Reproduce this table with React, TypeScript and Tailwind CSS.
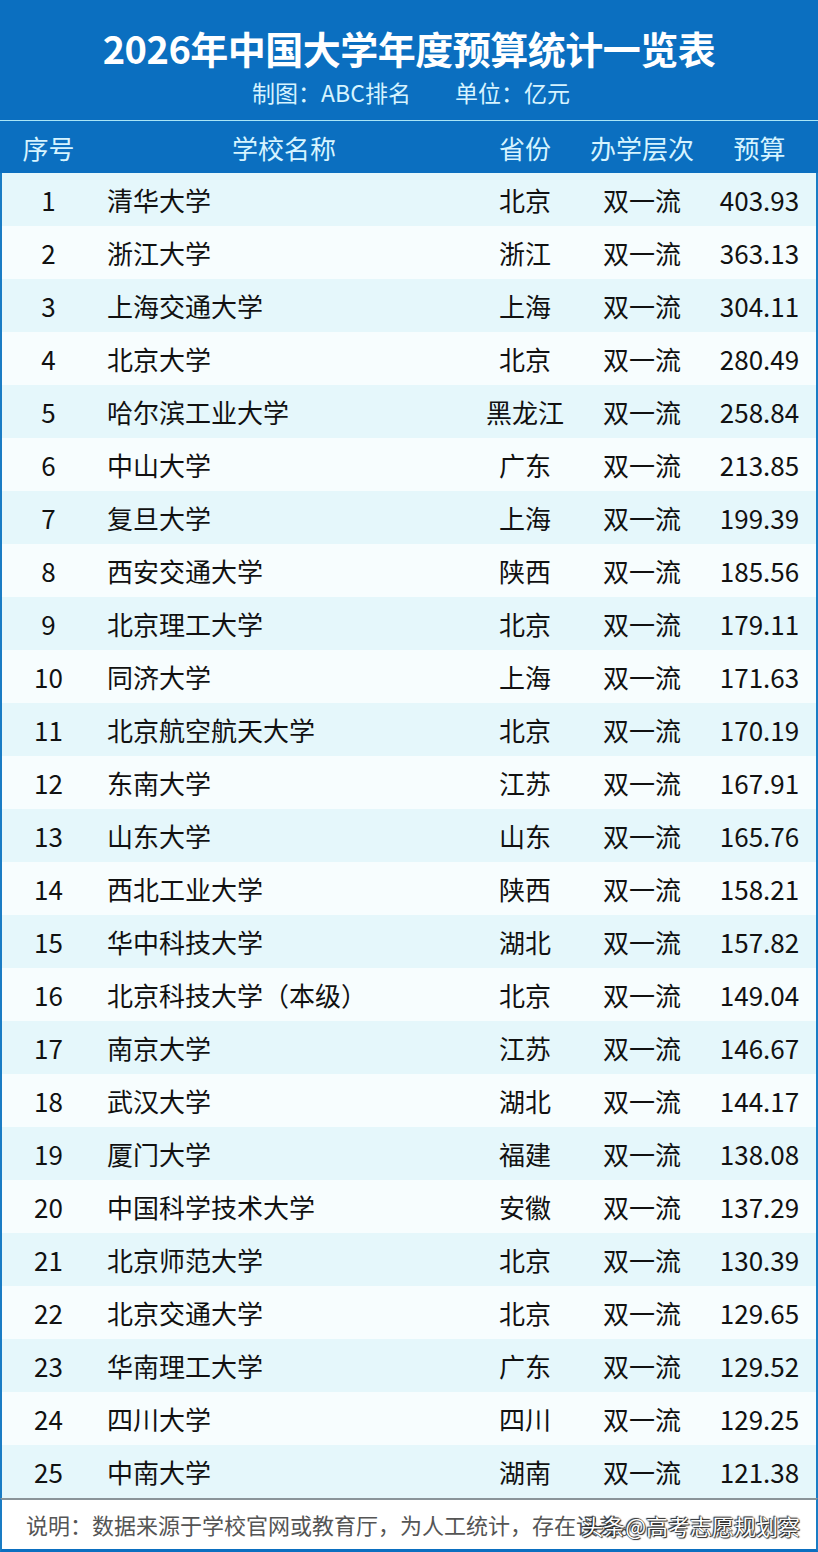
const rows: [string, string, string, string][] = [
  ['清华大学', '北京', '双一流', '403.93'],
  ['浙江大学', '浙江', '双一流', '363.13'],
  ['上海交通大学', '上海', '双一流', '304.11'],
  ['北京大学', '北京', '双一流', '280.49'],
  ['哈尔滨工业大学', '黑龙江', '双一流', '258.84'],
  ['中山大学', '广东', '双一流', '213.85'],
  ['复旦大学', '上海', '双一流', '199.39'],
  ['西安交通大学', '陕西', '双一流', '185.56'],
  ['北京理工大学', '北京', '双一流', '179.11'],
  ['同济大学', '上海', '双一流', '171.63'],
  ['北京航空航天大学', '北京', '双一流', '170.19'],
  ['东南大学', '江苏', '双一流', '167.91'],
  ['山东大学', '山东', '双一流', '165.76'],
  ['西北工业大学', '陕西', '双一流', '158.21'],
  ['华中科技大学', '湖北', '双一流', '157.82'],
  ['北京科技大学（本级）', '北京', '双一流', '149.04'],
  ['南京大学', '江苏', '双一流', '146.67'],
  ['武汉大学', '湖北', '双一流', '144.17'],
  ['厦门大学', '福建', '双一流', '138.08'],
  ['中国科学技术大学', '安徽', '双一流', '137.29'],
  ['北京师范大学', '北京', '双一流', '130.39'],
  ['北京交通大学', '北京', '双一流', '129.65'],
  ['华南理工大学', '广东', '双一流', '129.52'],
  ['四川大学', '四川', '双一流', '129.25'],
  ['中南大学', '湖南', '双一流', '121.38'],
];

const cols = 'grid grid-cols-[93px_378px_104px_130px_1fr] items-center';

export default function App() {
  return (
    <main
      className="w-[818px] h-[1552px] overflow-hidden bg-white"
      style={{ fontFamily: '"Noto Sans CJK SC", "Noto Sans", sans-serif' }}
    >
      <header className="h-[120px] bg-[#0b6fc0] flex flex-col items-center pt-[22px]">
        <h1 className="text-[38px] leading-[52px] font-bold text-white tracking-[-0.5px]">2026年中国大学年度预算统计一览表</h1>
        <p className="mt-[3px] text-[23px] leading-[30px] text-[#d6f4ff] flex gap-[44px] pl-[4px]">
          <span>制图：ABC排名</span>
          <span>单位：亿元</span>
        </p>
      </header>
      <div className="h-px bg-[#a9e6f7]" />
      <div className={`${cols} h-[52px] bg-[#0b6fc0] text-[26px] text-[#d6f4ff] px-[2px]`}>
        <span className="text-center">序号</span>
        <span className="text-center">学校名称</span>
        <span className="text-center">省份</span>
        <span className="text-center">办学层次</span>
        <span className="text-center pr-[4px]">预算</span>
      </div>
      <div className="border-x-2 border-[#1a7cc4]">
        {rows.map(([name, prov, level, budget], i) => (
          <div
            key={name}
            className={`${cols} h-[53px] text-[26px] text-[#111] ${i % 2 === 0 ? 'bg-[#e5f7fb]' : 'bg-[#f7fdfe]'}`}
          >
            <span className="text-center">{i + 1}</span>
            <span className="pl-[12px]">{name}</span>
            <span className="text-center">{prov}</span>
            <span className="text-center">{level}</span>
            <span className="text-center pr-[4px]">{budget}</span>
          </div>
        ))}
      </div>
      <footer className="relative h-[54px] border-t-2 border-[#8a9499] border-x-2 border-x-[#1a7cc4] border-b-[3px] border-b-[#0b6fc0] bg-white flex items-center pl-[24px]">
        <span className="text-[22px] text-[#555] whitespace-nowrap">说明：数据来源于学校官网或教育厅，为人工统计，存在误差。</span>
        <span
          className="absolute right-[16px] top-1/2 -translate-y-1/2 text-[22px] text-white whitespace-nowrap"
          style={{ textShadow: '0 0 1px #222, 1px 1px 1px #222, -1px -1px 1px #222' }}
        >
          头条@高考志愿规划察
        </span>
      </footer>
    </main>
  );
}
